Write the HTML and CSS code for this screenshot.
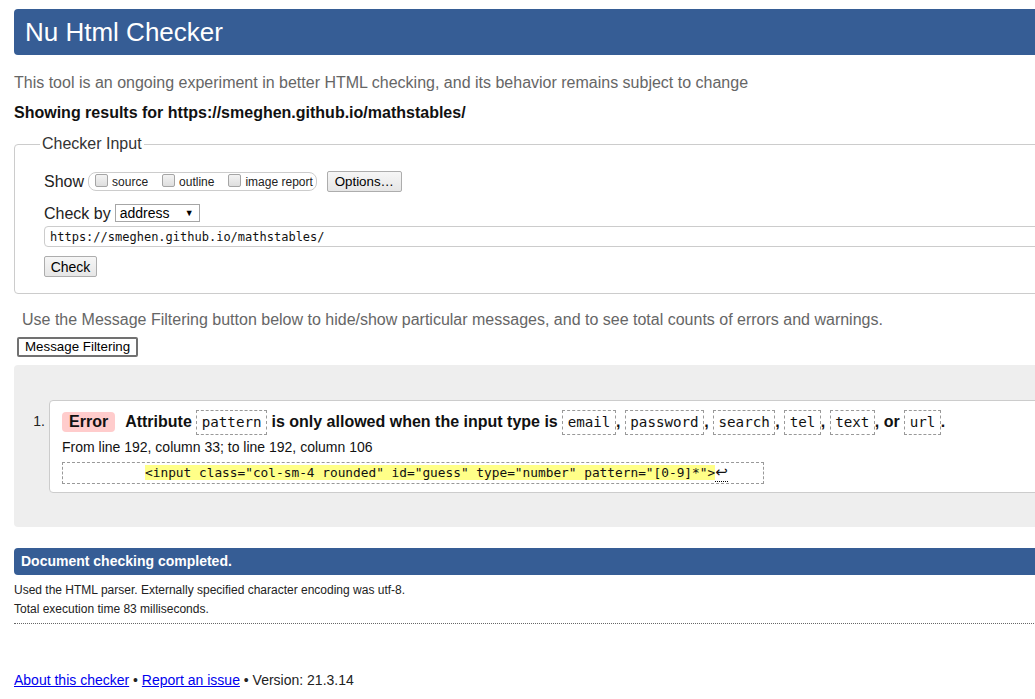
FILE: index.html
```html
<!DOCTYPE html>
<html lang="en">
<head>
<meta charset="utf-8">
<title>Showing results for https://smeghen.github.io/mathstables/ - Nu Html Checker</title>
<link rel="stylesheet" href="styles.css">
</head>
<body>
<div class="page">
  <h1 class="title">Nu Html Checker</h1>
  <p class="intro">This tool is an ongoing experiment in better HTML checking, and its behavior remains subject to change</p>
  <p class="showing">Showing results for https://smeghen.github.io/mathstables/</p>

  <fieldset class="checker">
    <legend class="legend">Checker Input</legend>
    <div class="row show-row">
      <span class="lbl">Show</span>
      <span class="cbgroup">
        <span class="cbitem"><span class="cb"></span>source</span>
        <span class="cbitem"><span class="cb"></span>outline</span>
        <span class="cbitem"><span class="cb"></span>image report</span>
      </span>
      <span class="btn opt-btn">Options…</span>
    </div>
    <div class="row checkby-row">
      <span class="lbl">Check by</span>
      <span class="select"><span>address</span><span class="arrow">▼</span></span>
    </div>
    <div class="urlbox">https://smeghen.github.io/mathstables/</div>
    <div class="row"><span class="btn check-btn">Check</span></div>
  </fieldset>

  <p class="filter-note">Use the Message Filtering button below to hide/show particular messages, and to see total counts of errors and warnings.</p>
  <div class="filter-row"><span class="filter-btn">Message Filtering</span></div>

  <div class="results">
    <div class="msgrow">
      <span class="num">1.</span>
      <div class="card">
        <p class="msg"><span class="err">Error</span><strong>Attribute <code>pattern</code> is only allowed when the input type is <code>email</code>, <code>password</code>, <code>search</code>, <code>tel</code>, <code>text</code>, or <code>url</code>.</strong></p>
        <p class="loc">From line 192, column 33; to line 192, column 106</p>
        <div class="extract-row"><pre class="extract">          <mark>&lt;input class="col-sm-4 rounded" id="guess" type="number" pattern="[0-9]*"&gt;</mark><b class="lf">↩</b>    </pre></div>
      </div>
    </div>
  </div>

  <div class="status">Document checking completed.</div>
  <p class="detail">Used the HTML parser. Externally specified character encoding was utf-8.</p>
  <p class="detail">Total execution time 83 milliseconds.</p>
  <hr class="dots">

  <p class="footer"><a href="#">About this checker</a> • <a href="#">Report an issue</a> • Version: 21.3.14</p>
</div>
</body>
</html>
```

FILE: styles.css
```css
html, body {
  margin: 0;
  padding: 0;
  overflow: hidden;
  background: #fff;
}
body {
  font-family: "Liberation Sans", Arial, sans-serif;
  color: #000;
}
.page {
  width: 1200px;
  padding: 9px 0 0 14px;
}
.title {
  margin: 0;
  height: 46px;
  line-height: 46px;
  padding-left: 11px;
  background: #365d95;
  color: #fff;
  font-size: 26px;
  font-weight: normal;
  border-radius: 4px;
}
.intro {
  margin: 18px 0 0;
  font-size: 16px;
  line-height: 20px;
  color: #666;
}
.showing {
  margin: 10px 0 0;
  font-size: 16px;
  line-height: 20px;
  font-weight: bold;
  color: #111;
}
.checker {
  margin: 11px 0 0;
  padding: 0 0 16px 29px;
  border: 1px solid #ccc;
  border-radius: 4px;
  min-width: 0;
}
.legend {
  padding: 0 2px;
  margin-left: -4px;
  font-size: 16px;
  line-height: 20px;
  color: #333;
}
.row {
  display: flex;
  align-items: center;
}
.lbl {
  font-size: 16px;
  color: #222;
}
.show-row {
  margin-top: 17px;
  height: 21px;
}
.cbgroup {
  display: flex;
  align-items: center;
  height: 17px;
  margin-left: 4px;
  padding: 0 3px 0 6px;
  border: 1px solid #ccc;
  border-radius: 8px;
  font-size: 12px;
  color: #222;
}
.cbitem {
  display: flex;
  align-items: center;
  margin-right: 14px;
}
.cbitem:last-child {
  margin-right: 0;
}
.cb {
  width: 11px;
  height: 11px;
  margin: -3px 4px 0 0;
  border: 1px solid #a5a5a5;
  border-radius: 2px;
  background: linear-gradient(#f3f3f3, #dedede);
}
.btn {
  display: inline-flex;
  align-items: center;
  justify-content: center;
  box-sizing: border-box;
  height: 21px;
  border: 1px solid #adadad;
  border-radius: 2px;
  background: linear-gradient(#f6f6f6, #e6e6e6);
  font-size: 13.33px;
  color: #000;
}
.opt-btn {
  width: 75px;
  margin-left: 10px;
}
.checkby-row {
  margin-top: 11px;
  height: 21px;
}
.select {
  display: inline-flex;
  align-items: center;
  justify-content: space-between;
  box-sizing: border-box;
  width: 85px;
  height: 18px;
  margin: -1px 0 0 4px;
  padding: 0 5px 0 4px;
  border: 1px solid #a6a6a6;
  font-size: 14px;
  color: #000;
  background: #fff;
}
.arrow {
  font-size: 9px;
}
.urlbox {
  box-sizing: border-box;
  height: 21px;
  margin-top: 2px;
  padding: 0 5px;
  line-height: 20px;
  border: 1px solid #ccc;
  border-radius: 4px;
  font-family: "DejaVu Sans Mono", monospace;
  font-size: 12px;
  color: #111;
}
.check-btn {
  width: 53px;
  margin-top: 9px;
  font-size: 14px;
}
.filter-note {
  margin: 16px 0 0 8px;
  font-size: 16px;
  line-height: 20px;
  color: #666;
}
.filter-row {
  margin-top: 7px;
  display: flex;
}
.filter-btn {
  box-sizing: border-box;
  height: 20px;
  margin-left: 3px;
  padding: 0 6px;
  line-height: 16px;
  border: 2px solid #717171;
  border-radius: 2px;
  background: #fff;
  font-size: 13.33px;
  color: #000;
}
.results {
  margin-top: 8px;
  height: 162px;
  box-sizing: border-box;
  padding: 35px 0 0 0;
  background: #eee;
  border-radius: 4px;
}
.msgrow {
  display: flex;
  align-items: flex-start;
}
.num {
  width: 31px;
  text-align: right;
  padding-top: 13px;
  margin-right: 4px;
  font-size: 14px;
  color: #222;
}
.card {
  flex: 1;
  box-sizing: border-box;
  height: 93px;
  padding: 8px 0 0 12px;
  background: #fff;
  border: 1px solid #ccc;
  border-radius: 4px;
}
.msg {
  margin: 0;
  font-size: 16px;
  line-height: 25px;
  display: flex;
  align-items: center;
  white-space: pre;
}
.msg strong {
  color: #111;
}
.err {
  display: inline-block;
  height: 20px;
  line-height: 20px;
  padding: 0 7px;
  margin-right: 10px;
  background: #fcc;
  border-radius: 4px;
  font-weight: bold;
  color: #111;
}
.msg code {
  display: inline-block;
  box-sizing: border-box;
  height: 25px;
  line-height: 23px;
  vertical-align: middle;
  padding: 0 4.5px;
  border: 1px dashed #999;
  font-family: "DejaVu Sans Mono", monospace;
  font-size: 14.2px;
  font-weight: normal;
  color: #111;
}
.loc {
  margin: 4px 0 0;
  font-size: 14px;
  line-height: 17px;
  color: #111;
}
.extract-row {
  display: flex;
  margin-top: 6px;
}
.extract {
  margin: 0;
  box-sizing: border-box;
  height: 22px;
  padding: 0 4px 0 5px;
  line-height: 20px;
  border: 1px dashed #999;
  font-family: "DejaVu Sans Mono", monospace;
  font-size: 12.8px;
  color: #111;
}
.extract mark {
  background: #ff8;
  color: #111;
}
.lf {
  font-family: "DejaVu Sans", sans-serif;
  font-size: 15px;
  line-height: 14px;
  font-weight: normal;
  border-bottom: 1px dotted #000;
}
.status {
  margin-top: 21px;
  height: 27px;
  line-height: 27px;
  padding-left: 7px;
  background: #365d95;
  color: #fff;
  font-weight: bold;
  font-size: 14px;
  border-radius: 4px 0 0 4px;
}
.detail {
  margin: 0;
  font-size: 12px;
  line-height: 19px;
  color: #222;
}
.status + .detail {
  margin-top: 6px;
}
.dots {
  margin: 4px 0 0;
  height: 0;
  border: 0;
  border-top: 1px dotted #666;
}
.footer {
  margin: 48px 0 0;
  font-size: 14px;
  line-height: 17px;
  color: #222;
}
.footer a {
  color: #00e;
  text-decoration: underline;
}
```
